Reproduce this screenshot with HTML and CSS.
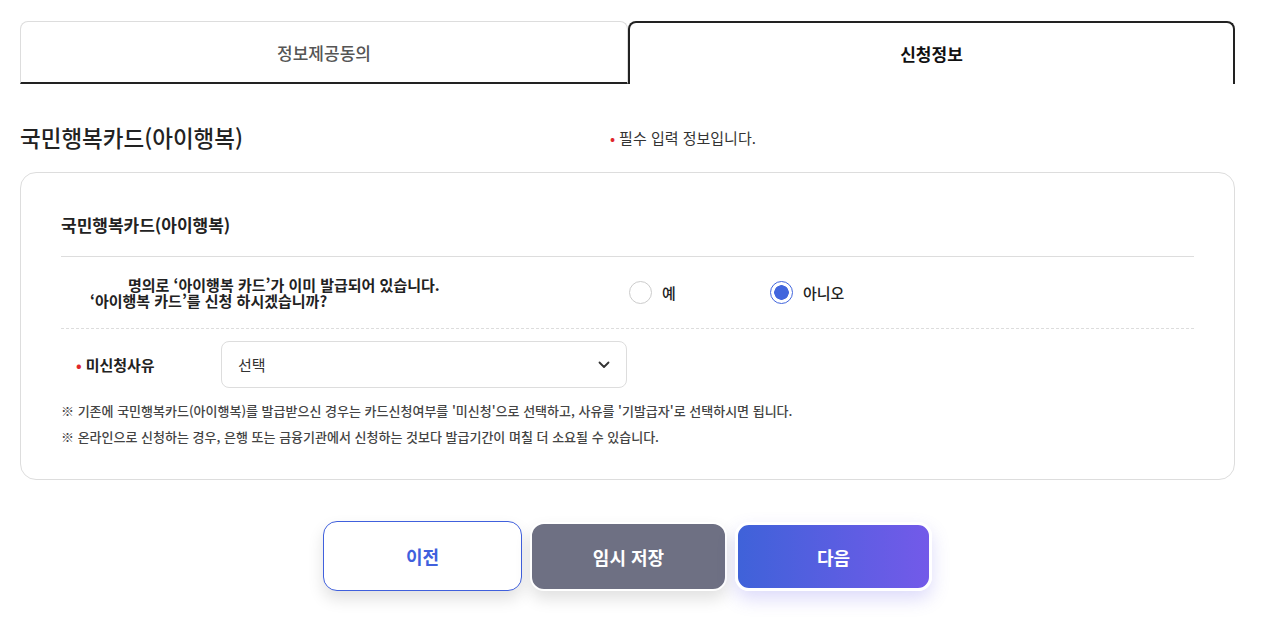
FILE: index.html
```html
<!DOCTYPE html>
<html lang="ko">
<head>
<meta charset="utf-8">
<title>신청정보</title>
<link rel="stylesheet" href="styles.css">
</head>
<body>
<div class="page">
  <div class="tabs">
    <div class="tab">정보제공동의</div>
    <div class="tab active">신청정보</div>
  </div>

  <div class="head-row">
    <h2 class="page-title">국민행복카드(아이행복)</h2>
    <p class="req-note"><span class="dot">•</span>필수 입력 정보입니다.</p>
  </div>

  <div class="card">
    <h3 class="card-title">국민행복카드(아이행복)</h3>

    <div class="q-row">
      <p class="question"><span class="q-line1">명의로 ‘아이행복 카드’가 이미 발급되어 있습니다.</span><br>‘아이행복 카드’를 신청 하시겠습니까?</p>
      <div class="radios">
        <label class="radio"><span class="circle"></span>예</label>
        <label class="radio"><span class="circle checked"></span>아니오</label>
      </div>
    </div>

    <div class="sel-row">
      <div class="sel-label"><span class="dot">•</span>미신청사유</div>
      <div class="select">
        <span>선택</span>
        <svg class="chev" width="12" height="8" viewBox="0 0 12 8"><path d="M1.5 1.5 L6 6 L10.5 1.5" fill="none" stroke="#333" stroke-width="1.8" stroke-linecap="round" stroke-linejoin="round"/></svg>
      </div>
    </div>

    <p class="note">※ 기존에 국민행복카드(아이행복)를 발급받으신 경우는 카드신청여부를 '미신청'으로 선택하고, 사유를 '기발급자'로 선택하시면 됩니다.</p>
    <p class="note">※ 온라인으로 신청하는 경우, 은행 또는 금융기관에서 신청하는 것보다 발급기간이 며칠 더 소요될 수 있습니다.</p>
  </div>

  <div class="actions">
    <button class="btn btn-prev">이전</button>
    <button class="btn btn-save">임시 저장</button>
    <button class="btn btn-next">다음</button>
  </div>
</div>
</body>
</html>
```

FILE: styles.css
```css
* { box-sizing: border-box; }
html, body { margin: 0; padding: 0; background: #fff; }
body {
  font-family: "Noto Sans CJK KR", "Noto Sans", sans-serif;
  color: #222;
}
.page {
  width: 1215px;
  margin-left: 20px;
  padding-top: 21px;
  padding-bottom: 40px;
}
.tabs {
  display: grid;
  grid-template-columns: 608px 607px;
  height: 63px;
}
.tab {
  display: flex;
  align-items: center;
  justify-content: center;
  font-size: 17px;
  font-weight: 500;
  color: #555;
  border: 1px solid #ddd;
  border-bottom: 2px solid #222;
  border-radius: 8px 8px 0 0;
}
.tab.active {
  border: 2px solid #222;
  border-bottom: none;
  color: #111;
  font-weight: 700;
}
.head-row {
  display: grid;
  grid-template-columns: 590px 1fr;
  align-items: center;
  height: 88px;
  padding-top: 18px;
}
.page-title {
  margin: 0;
  font-size: 22.5px;
  font-weight: 500;
  color: #222;
}
.req-note {
  margin: 0;
  font-size: 15px;
  color: #333;
}
.dot { color: #e0262b; margin-right: 4px; }
.card {
  border: 1px solid #ddd;
  border-radius: 16px;
  padding: 40px 40px 29px;
}
.card-title {
  margin: 0;
  font-size: 17px;
  font-weight: 700;
  line-height: 24px;
  padding-bottom: 19px;
  border-bottom: 1px solid #ddd;
}
.q-row {
  display: grid;
  grid-template-columns: 568px 1fr;
  align-items: center;
  height: 72px;
  border-bottom: 1px dashed #ddd;
}
.question {
  margin: 0;
  padding-left: 29px;
  font-size: 15px;
  font-weight: 700;
  line-height: 16px;
}
.q-line1 { padding-left: 38px; }
.radios {
  display: grid;
  grid-template-columns: 141px 141px;
}
.radio {
  display: flex;
  align-items: center;
  gap: 10px;
  font-size: 15px;
  font-weight: 500;
}
.circle {
  width: 23px;
  height: 23px;
  border: 1px solid #ccc;
  border-radius: 50%;
  background: #fff;
}
.circle.checked {
  border: 1.5px solid #4266dd;
  background: radial-gradient(circle, #4266dd 0 7px, #fff 7.5px);
}
.sel-row {
  display: grid;
  grid-template-columns: 160px 406px;
  align-items: center;
  padding-top: 12px;
}
.sel-label {
  padding-left: 15px;
  font-size: 15px;
  font-weight: 700;
}
.select {
  height: 47px;
  border: 1px solid #ddd;
  border-radius: 8px;
  display: flex;
  align-items: center;
  justify-content: space-between;
  padding: 0 16px 0 16px;
  font-size: 15px;
  color: #333;
}
.note {
  margin: 0;
  font-size: 13px;
  line-height: 26px;
  color: #444;
  font-weight: 500;
}
.sel-row + .note { margin-top: 10px; }
.actions {
  display: flex;
  justify-content: center;
  gap: 8px;
  margin-top: 41px;
}
.btn {
  font-family: inherit;
  font-size: 18px;
  font-weight: 700;
  border-radius: 14px;
  height: 70px;
  width: 199px;
  cursor: pointer;
}
.btn-prev {
  background: #fff;
  color: #4060dd;
  border: 1px solid #4060dd;
  box-shadow: 0 8px 16px rgba(0,0,0,0.12);
}
.btn-save {
  width: 197px;
  height: 69px;
  margin-top: 1px;
  background: #6e7083;
  color: #fff;
  border: 2px solid #fff;
  box-shadow: 0 8px 16px rgba(0,0,0,0.12);
}
.btn-next {
  width: 197px;
  height: 69px;
  margin-top: 1px;
  background: linear-gradient(90deg, #3f62d9, #735ae9);
  color: #fff;
  border: 3px solid #fff;
  box-shadow: 0 8px 18px rgba(100,90,230,0.22);
}
```
